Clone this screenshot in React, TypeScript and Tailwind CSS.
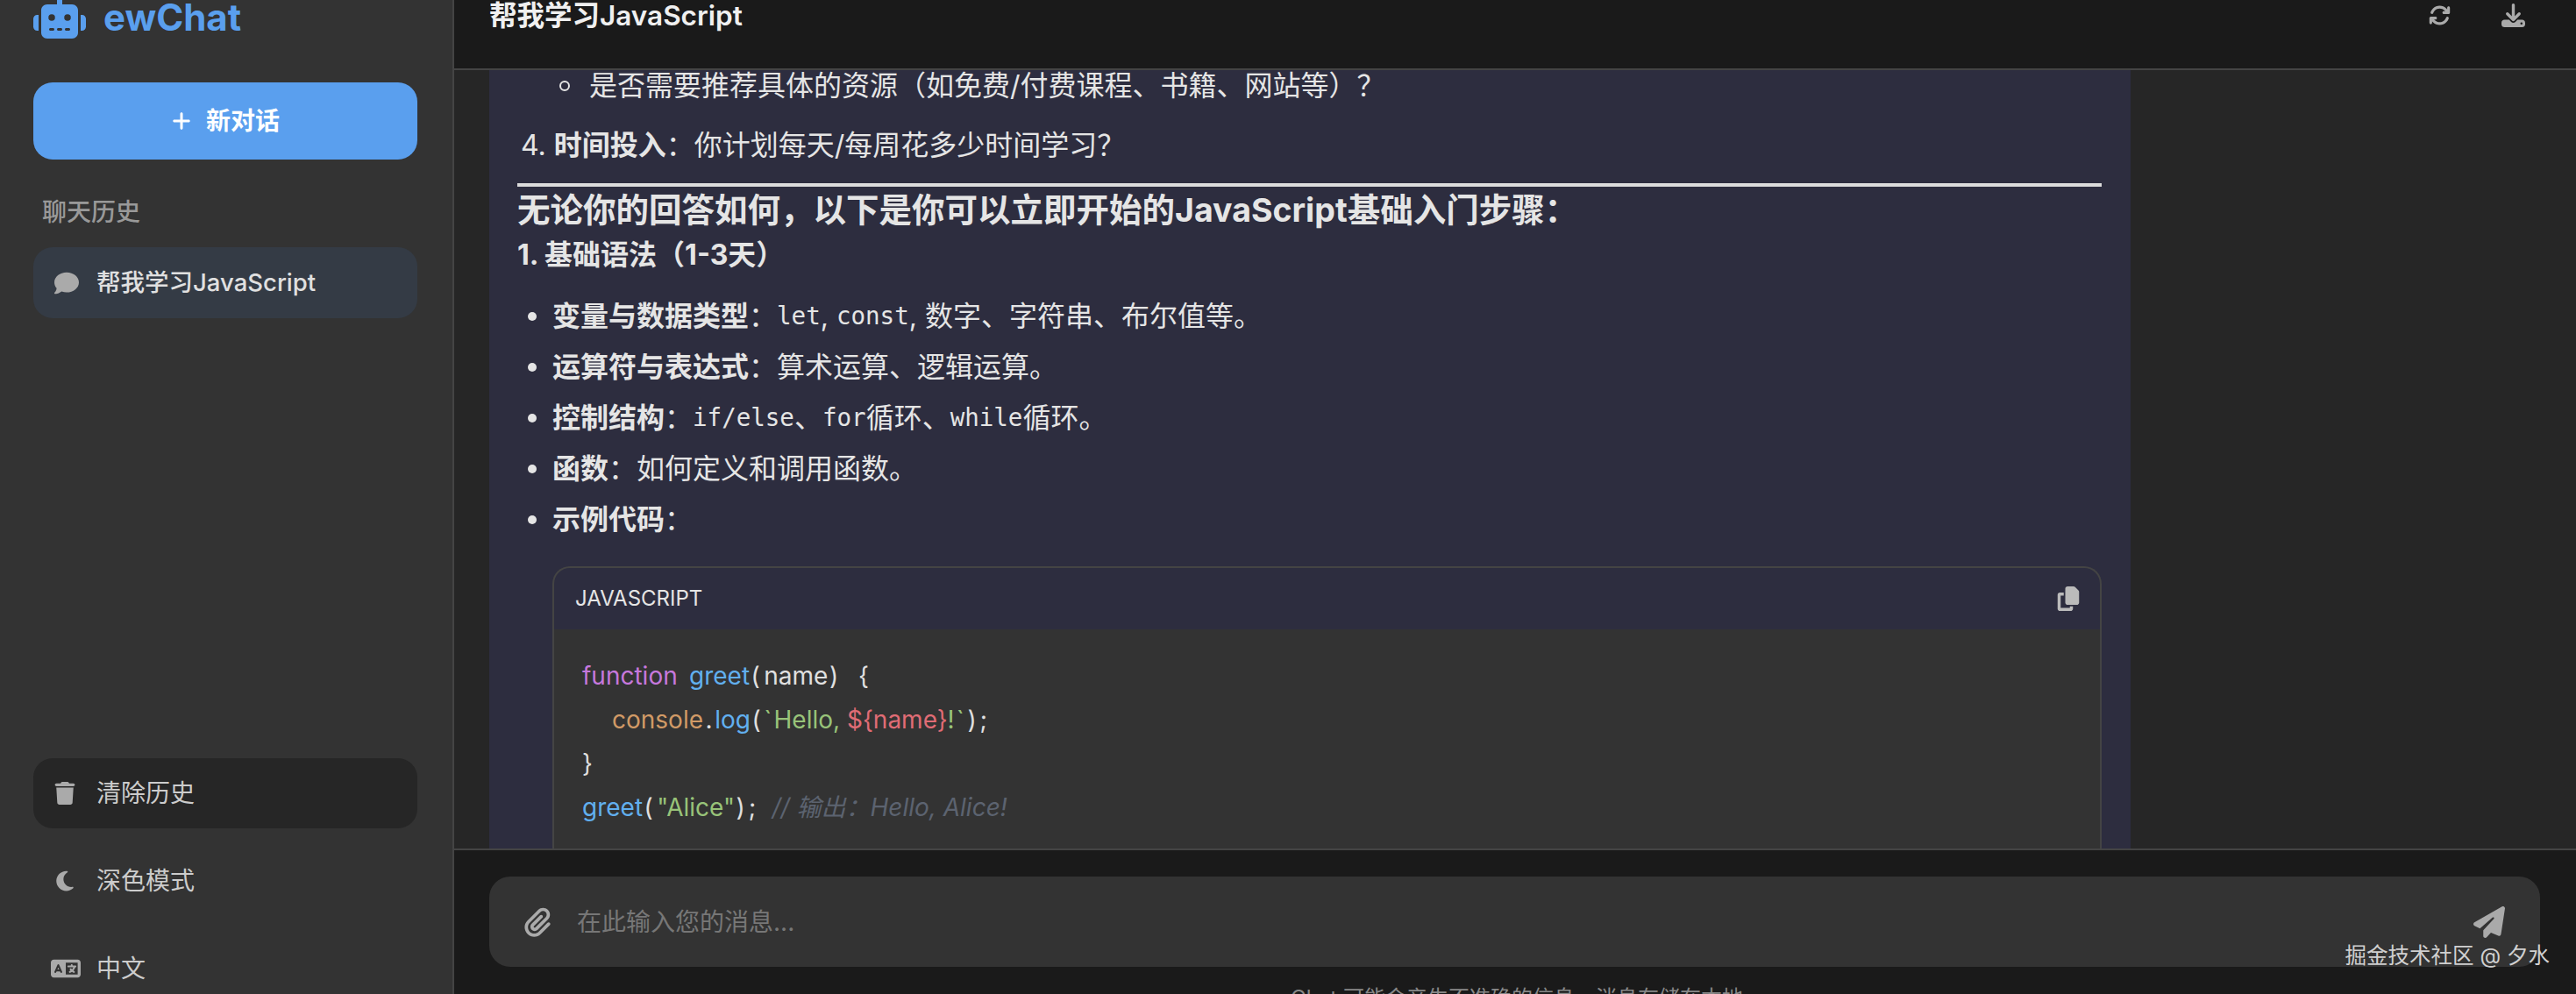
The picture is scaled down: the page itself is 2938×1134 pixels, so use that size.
import {
  FaRobot,
  FaPlus,
  FaComment,
  FaTrash,
  FaMoon,
  FaLanguage,
  FaArrowsRotate,
  FaDownload,
  FaCopy,
  FaPaperclip,
  FaPaperPlane,
} from "react-icons/fa6";

const sans = "[font-family:Inter,'Noto_Sans_CJK_SC',sans-serif]";

// punctuation in the code block sits in fixed-width cells
function Cells({ children }: { children: string }) {
  return (
    <>
      {children.split("").map((c, i) => (
        <span key={i} className="inline-block w-[13.25px] text-center">
          {c === " " ? "\u00a0" : c}
        </span>
      ))}
    </>
  );
}

function Bullet({ title, children }: { title: string; children?: React.ReactNode }) {
  return (
    <li className="flex h-[58px] items-center">
      <span className="ml-[12px] mr-[18px] h-[10px] w-[10px] rounded-full bg-[#e5e5e5]" />
      <strong className="font-bold">{title}</strong>
      <span>：</span>
      {children}
    </li>
  );
}

function Code({ children }: { children: string }) {
  return <span className="[font-family:'DejaVu_Sans_Mono',monospace] text-[27.5px]">{children}</span>;
}

export default function App() {
  return (
    <div className={`flex h-screen w-full overflow-hidden bg-[#262626] text-[#e5e5e5] ${sans}`}>
      {/* Sidebar */}
      <aside className="flex h-full w-[518px] shrink-0 flex-col border-r-2 border-[#444444] bg-[#333333] pl-[38px] pr-[40px]">
        <div className="-mt-[4px] flex h-[48px] items-center gap-[20px] text-[#5a9fee]">
          <FaRobot className="text-[60px]" />
          <span className="text-[42px] font-bold leading-none">ewChat</span>
        </div>

        <button className="mt-[50px] flex h-[88px] items-center justify-center gap-[16px] rounded-[22px] bg-[#5a9fee] text-[28px] font-semibold text-white">
          <FaPlus className="text-[24px]" />
          新对话
        </button>

        <div className="mt-[40px] pl-[10px] text-[28px] leading-[40px] font-medium text-[#999999]">聊天历史</div>

        <div className="mt-[20px] flex h-[81px] items-center gap-[20px] rounded-[22px] bg-[#343b45] pl-[24px] text-[27.5px] font-medium text-[#e0e0e0]">
          <FaComment className="text-[28px] text-[#aaaaaa]" />
          帮我学习JavaScript
        </div>

        <div className="mt-auto mb-[-11px] flex flex-col">
          <div className="flex h-[80px] items-center gap-[24px] rounded-[22px] bg-[#262626] pl-[24px] text-[28px] text-[#cccccc]">
            <FaTrash className="w-[24px] text-[26px] text-[#aaaaaa]" />
            清除历史
          </div>
          <div className="mt-[20px] flex h-[80px] items-center gap-[24px] pl-[24px] text-[28px] text-[#cccccc]">
            <FaMoon className="w-[24px] text-[26px] text-[#aaaaaa]" />
            深色模式
          </div>
          <div className="mt-[20px] flex h-[80px] items-center gap-[18px] pl-[20px] text-[28px] text-[#cccccc]">
            <FaLanguage className="w-[34px] text-[36px] text-[#aaaaaa]" />
            中文
          </div>
        </div>
      </aside>

      {/* Main */}
      <main className="flex h-full min-w-0 flex-1 flex-col">
        <header className="flex h-[80px] shrink-0 items-start justify-between border-b-2 border-[#444444] bg-[#1a1a1a] pl-[40px] pr-[58px]">
          <h1 className="text-[31.5px] leading-[36px] font-semibold text-[#f0f0f0]">帮我学习JavaScript</h1>
          <div className="mt-[4px] flex items-center gap-[58px] text-[#aaaaaa]">
            <FaArrowsRotate className="text-[25px]" />
            <FaDownload className="text-[27px]" />
          </div>
        </header>

        <div className="min-h-0 flex-1 overflow-hidden pl-[40px]">
          <div className="h-full w-[1872px] bg-[#2d2d3f] pl-[32px] pr-[33px] text-[32px]">
            <div className="flex h-[36px] items-center pl-[48px]">
              <span className="mr-[22px] h-[12px] w-[12px] rounded-full border-2 border-[#e5e5e5]" />
              是否需要推荐具体的资源（如免费/付费课程、书籍、网站等）？
            </div>

            <div className="mt-[31px] flex h-[38px] items-center pl-[4px]">
              4.&nbsp;<strong className="font-bold">时间投入</strong>：你计划每天/每周花多少时间学习？
            </div>

            <hr className="mt-[24px] h-[4px] border-0 bg-[#dcdcdc]" />

            <h2 className="mt-[5px] text-[37.5px] leading-[44px] font-bold">无论你的回答如何，以下是你可以立即开始的JavaScript基础入门步骤：</h2>
            <h3 className="mt-[10px] text-[32px] leading-[38px] font-bold">1. 基础语法（1-3天）</h3>

            <ul className="mt-[22px]">
              <Bullet title="变量与数据类型">
                <Code>let</Code>,&nbsp;<Code>const</Code>,&nbsp;数字、字符串、布尔值等。
              </Bullet>
              <Bullet title="运算符与表达式">算术运算、逻辑运算。</Bullet>
              <Bullet title="控制结构">
                <Code>if/else</Code>、<Code>for</Code>循环、<Code>while</Code>循环。
              </Bullet>
              <Bullet title="函数">如何定义和调用函数。</Bullet>
              <Bullet title="示例代码" />
            </ul>

            {/* Code block */}
            <div className="ml-[40px] mt-[24px] overflow-hidden rounded-t-[20px] border-2 border-b-0 border-[#444444]">
              <div className="flex h-[70px] items-center justify-between pl-[24px] pr-[22px]">
                <span className="text-[24px] text-[#e5e5e5]">JAVASCRIPT</span>
                <FaCopy className="text-[28px] text-[#bbbbbb]" />
              </div>
              <div className="h-[260px] bg-[#333333] pl-[32px] pt-[28px] text-[28px] leading-[50px] text-[#e0e0e0]">
                <div>
                  <span className="text-[#c678dd]">function</span>
                  <Cells> </Cells>
                  <span className="text-[#61afef]">greet</span>
                  <Cells>(</Cells>
                  <span className="ml-[3px]">name</span>
                  <Cells>{") "}</Cells>
                  <span className="ml-[8px]">{"{"}</span>
                </div>
                <div className="pl-[34px]">
                  <span className="text-[#d19a66]">console</span>
                  <Cells>.</Cells>
                  <span className="text-[#61afef]">log</span>
                  <Cells>(</Cells>
                  <span className="text-[#98c379]">
                    <Cells>`</Cells>Hello,{" "}
                  </span>
                  <span className="text-[#e06c75]">{"${name}"}</span>
                  <span className="text-[#98c379]">
                    !<Cells>`</Cells>
                  </span>
                  <Cells>);</Cells>
                </div>
                <div>{"}"}</div>
                <div>
                  <span className="text-[#61afef]">greet</span>
                  <Cells>(</Cells>
                  <span className="ml-[3px] text-[#98c379]">"Alice"</span>
                  <Cells>);</Cells>
                  <span className="ml-[16px] italic text-[#5c6370]">// 输出：Hello, Alice!</span>
                </div>
              </div>
            </div>
          </div>
        </div>

        {/* Input */}
        <footer className="relative h-[166px] shrink-0 border-t-2 border-[#444444] bg-[#1a1a1a] px-[40px] pt-[30px]">
          <div className="flex h-[103px] w-[2339px] items-center justify-between rounded-[24px] bg-[#333333] pl-[38px] pr-[40px]">
            <div className="flex items-center gap-[28px]">
              <FaPaperclip className="text-[34px] text-[#aaaaaa]" />
              <span className="text-[28px] text-[#777777]">在此输入您的消息...</span>
            </div>
            <FaPaperPlane className="text-[36px] text-[#aaaaaa]" />
          </div>
          <p className="ml-[4px] mt-[21px] text-center text-[24px] leading-[30px] text-[#888888]">Chat 可能会产生不准确的信息，消息存储在本地</p>
          <span className="absolute right-[30px] top-[105px] text-[24.5px] leading-[30px] text-[#d0d0d0]">掘金技术社区 @ 夕水</span>
        </footer>
      </main>
    </div>
  );
}
